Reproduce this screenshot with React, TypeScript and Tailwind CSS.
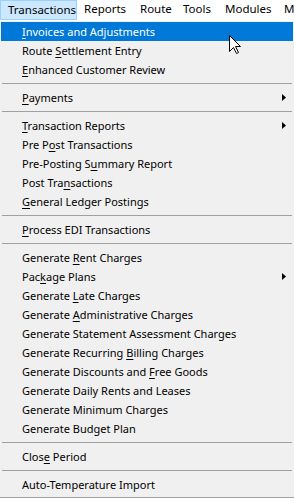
import { Fragment } from "react";

type Item = { label: string; hot?: number; sub?: boolean; active?: boolean } | "sep";

const menus = [
  { label: "Transactions", w: "w-[77px]", open: true },
  { label: "Reports", w: "w-[56px]" },
  { label: "Route", w: "w-[43px]" },
  { label: "Tools", w: "w-[42px]" },
  { label: "Modules", w: "w-[59px]" },
  { label: "Maintenance", w: "w-[90px]" },
];

const items: Item[] = [
  { label: "Invoices and Adjustments", hot: 0, active: true },
  { label: "Route Settlement Entry", hot: 6 },
  { label: "Enhanced Customer Review", hot: 0 },
  "sep",
  { label: "Payments", hot: 0, sub: true },
  "sep",
  { label: "Transaction Reports", hot: 0, sub: true },
  { label: "Pre Post Transactions", hot: 5 },
  { label: "Pre-Posting Summary Report", hot: 13 },
  { label: "Post Transactions", hot: 8 },
  { label: "General Ledger Postings", hot: 0 },
  "sep",
  { label: "Process EDI Transactions", hot: 0 },
  "sep",
  { label: "Generate Rent Charges", hot: 9 },
  { label: "Package Plans", hot: 3, sub: true },
  { label: "Generate Late Charges", hot: 9 },
  { label: "Generate Administrative Charges", hot: 9 },
  { label: "Generate Statement Assessment Charges" },
  { label: "Generate Recurring Billing Charges", hot: 19 },
  { label: "Generate Discounts and Free Goods", hot: 23 },
  { label: "Generate Daily Rents and Leases" },
  { label: "Generate Minimum Charges" },
  { label: "Generate Budget Plan" },
  "sep",
  { label: "Close Period", hot: 4 },
  "sep",
  { label: "Auto-Temperature Import" },
];

const Label = ({ text, hot }: { text: string; hot?: number }) => {
  if (hot === undefined) return <span>{text}</span>;
  return (
    <span>
      {text.slice(0, hot)}
      <span className="underline underline-offset-[2px]">{text[hot]}</span>
      {text.slice(hot + 1)}
    </span>
  );
};

const Cursor = () => (
  <svg width="13" height="20" viewBox="0 0 13 20" className="absolute left-[229px] top-[35px]">
    <polygon
      points="0.5,0.5 0.5,16.5 4.5,12.5 7.5,18.5 9.5,17.5 6.5,11.5 11.5,11.5"
      fill="#fff"
      stroke="#000"
      strokeWidth="1"
    />
  </svg>
);

export default function App() {
  return (
    <div
      className="relative w-[294px] h-[503px] overflow-hidden bg-white text-[11px] text-black"
      style={{ fontFamily: '"Noto Sans", "Liberation Sans", sans-serif' }}
    >
      <div className="flex h-[20px] bg-white whitespace-nowrap">
        {menus.map((m) => (
          <div
            key={m.label}
            className={`${m.w} shrink-0 h-[20px] leading-[18px] pl-[7px] text-[11.5px] ${
              m.open ? "bg-[#cce8ff] border border-[#99d1ff] pl-[5px]" : ""
            }`}
          >
            {m.label}
          </div>
        ))}
      </div>

      <div className="w-[294px] h-[478px] bg-[#f0f0f0] border-t border-white border-b border-b-[#a0a0a0] px-[1px] pt-[1px]">
        {items.map((it, i) =>
          it === "sep" ? (
            <div key={i} className="h-[9px] flex items-center px-[1px]">
              <div className="h-px w-full bg-[#a0a0a0]" />
            </div>
          ) : (
            <Fragment key={i}>
              <div
                className={`relative h-[19px] leading-[19px] pl-[21px] whitespace-nowrap ${
                  it.active ? "bg-[#0078d7] text-white" : ""
                }`}
              >
                <Label text={it.label} hot={it.hot} />
                {it.sub && (
                  <svg
                    width="4"
                    height="7"
                    viewBox="0 0 4 7"
                    className="absolute left-[281px] top-[6px]"
                  >
                    <polygon points="0,0 4,3.5 0,7" fill="#000" />
                  </svg>
                )}
              </div>
            </Fragment>
          )
        )}
      </div>

      <Cursor />
    </div>
  );
}
